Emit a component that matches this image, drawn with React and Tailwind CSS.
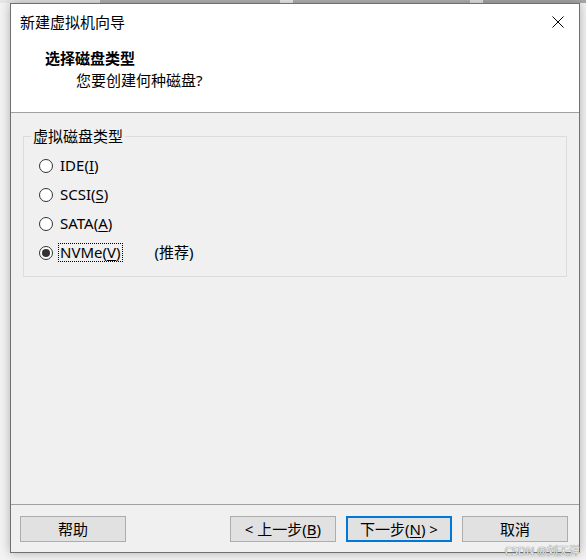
import React from "react";

const font = {
  fontFamily: '"Noto Sans", "Noto Sans CJK SC", sans-serif',
};

const Radio = ({ checked }) => (
  <span className="flex h-[14px] w-[14px] shrink-0 items-center justify-center rounded-full border border-[#333333] bg-white">
    {checked && <span className="h-[8px] w-[8px] rounded-full bg-[#333333]" />}
  </span>
);

const Option = ({ label, mnemonic, checked, extra }) => (
  <div className="flex h-[29px] items-center pl-[8px]">
    <Radio checked={checked} />
    <span
      className={`ml-[5px] px-[1px] leading-[17px] ${
        checked ? "border border-dotted border-black" : "border border-transparent"
      }`}
    >
      {label}(<span className="underline underline-offset-2">{mnemonic}</span>)
    </span>
    {extra && <span className="ml-[32px]">{extra}</span>}
  </div>
);

const Button = ({ children, primary }) => (
  <button
    className={`flex h-[26px] w-[106px] items-center justify-center bg-[#e1e1e1] text-[15px] leading-none text-black ${
      primary ? "border-2 border-[#0078d7]" : "border border-[#adadad]"
    }`}
  >
    {children}
  </button>
);

export default function App() {
  return (
    <div
      className="relative flex h-[560px] w-[586px] flex-col overflow-hidden bg-[#f3f3f3]"
      style={font}
    >
      {/* backdrop strip */}
      <div className="flex h-[3px]">
        <div className="w-[100px] bg-[#e6e6e6]" />
        <div className="w-[180px] bg-[#b4b4b4]" />
        <div className="w-[13px] bg-[#f0f0f0]" />
        <div className="w-[177px] bg-[#b4b4b4]" />
        <div className="w-[13px] bg-[#e6e6e6]" />
        <div className="flex-1 bg-[#a8a8a8]" />
      </div>

      <div className="ml-[10px] flex h-[550px] w-[570px] flex-col border border-[#707070] bg-[#f0f0f0] text-[15px] text-black shadow-[0_0_10px_rgba(0,0,0,0.28)]">
        {/* header */}
        <div className="h-[109px] border-b border-[#a0a0a0] bg-white pt-[8px]">
          <div className="flex h-5 items-center justify-between pl-[9px] pr-[15px] leading-5">
            <span>新建虚拟机向导</span>
            <svg width="12" height="12" viewBox="0 0 12 12" aria-hidden>
              <path d="M0.5 0.5L11.5 11.5M11.5 0.5L0.5 11.5" stroke="#000" strokeWidth="1" />
            </svg>
          </div>
          <div className="mt-[16px] pl-[34px] font-bold leading-5">选择磁盘类型</div>
          <div className="mt-[2px] pl-[65px] leading-5">您要创建何种磁盘?</div>
        </div>

        {/* body */}
        <div className="flex-1 px-[12px] pt-[13px]">
          <fieldset className="border border-[#dcdcdc] pb-[9px] pl-[7px] pt-[5px]">
            <legend className="px-[2px] leading-5">虚拟磁盘类型</legend>
            <Option label="IDE" mnemonic="I" />
            <Option label="SCSI" mnemonic="S" />
            <Option label="SATA" mnemonic="A" />
            <Option label="NVMe" mnemonic="V" checked extra="(推荐)" />
          </fieldset>
        </div>

        {/* footer */}
        <div className="flex h-[48px] border-t border-[#a0a0a0] pl-[9px] pr-[11px] pt-[11px]">
          <Button>帮助</Button>
          <div className="flex-1" />
          <div className="flex gap-[10px]">
            <Button>
              &lt; 上一步(<span className="underline underline-offset-2">B</span>)
            </Button>
            <Button primary>
              下一步(<span className="underline underline-offset-2">N</span>) &gt;
            </Button>
            <Button>取消</Button>
          </div>
        </div>
      </div>

      <span className="absolute bottom-[4px] right-[6px] text-[11px] leading-none text-[#ededed] [text-shadow:0_0_1px_#7a7a7a,0_0_1px_#7a7a7a]">
        CSDN @刘天洋
      </span>
    </div>
  );
}
